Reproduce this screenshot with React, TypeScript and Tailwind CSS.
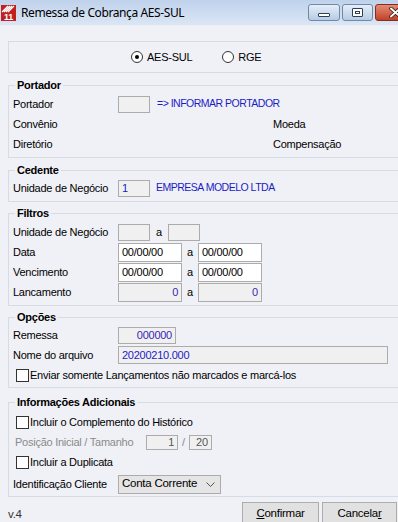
import type { ReactNode } from "react";

/** Windows-style "Remessa de Cobrança" dialog. */

function AppIcon() {
  return (
    <svg width="15" height="16" viewBox="0 0 15 16" className="shrink-0">
      <rect x="0" y="0" width="15" height="16" fill="#c21f1f" />
      <path d="M1 7 L7 1 M3 7 L9 1 M5 7 L11 1 M7 7 L13 1" stroke="#fff" strokeWidth="1.2" />
      <text x="3" y="15" fontSize="9" fontWeight="bold" fill="#fff" fontFamily="Liberation Sans, Arial, sans-serif">
        11
      </text>
    </svg>
  );
}

function TitleBar() {
  return (
    <div className="flex h-[25px] w-[418px] items-center bg-gradient-to-b from-[#bfd2ec] to-[#dbe6f4] pl-[1px]">
      <AppIcon />
      <span className="ml-[5px] font-['Noto_Sans',sans-serif] text-[12px] tracking-[-0.4px] text-black">
        Remessa de Cobrança AES-SUL
      </span>
      <div className="ml-auto mt-[4px] flex h-[17px] gap-[2px] self-start">
        <div className="flex w-[32px] items-center justify-center rounded-[3px] border border-[#6f8aa8] bg-gradient-to-b from-[#e6eef8] to-[#b7cbe3]">
          <div className="mt-[5px] h-[4px] w-[12px] rounded-[1px] border border-[#2f3f55] bg-white" />
        </div>
        <div className="flex w-[31px] items-center justify-center rounded-[3px] border border-[#6f8aa8] bg-gradient-to-b from-[#e6eef8] to-[#b7cbe3]">
          <div className="flex h-[9px] w-[11px] items-center justify-center rounded-[1px] border border-[#2f3f55] bg-white">
            <div className="h-[3px] w-[5px] border border-[#2f3f55]" />
          </div>
        </div>
        <div className="flex w-[43px] items-center justify-start rounded-[3px] border border-[#8c2b1c] bg-gradient-to-b from-[#e38a74] to-[#c23f26] pl-[13px]">
          <svg width="13" height="11" viewBox="0 0 13 11">
            <path d="M2 1.5 L11 9.5 M11 1.5 L2 9.5" stroke="#3b1a14" strokeWidth="3.6" strokeLinecap="round" />
            <path d="M2 1.5 L11 9.5 M11 1.5 L2 9.5" stroke="#fff" strokeWidth="2" strokeLinecap="round" />
          </svg>
        </div>
      </div>
    </div>
  );
}

function Group({ title, className = "", children }: { title?: string; className?: string; children: ReactNode }) {
  return (
    <fieldset className={`mr-[-24px] border border-[#d6dce4] pl-[4px] ${className}`}>
      {title && (
        <legend className="ml-[2px] px-[2px] text-[11px] font-bold leading-[14px] text-black">{title}</legend>
      )}
      {children}
    </fieldset>
  );
}

function Row({ label, children, className = "h-5" }: { label?: ReactNode; children?: ReactNode; className?: string }) {
  return (
    <div className={`flex items-center ${className}`}>
      <span className="w-[105px] shrink-0">{label}</span>
      {children}
    </div>
  );
}

function Box({
  w,
  h = "h-[17px]",
  value,
  right,
  white,
  color = "text-black",
}: {
  w: string;
  h?: string;
  value?: string;
  right?: boolean;
  white?: boolean;
  color?: string;
}) {
  return (
    <div
      className={`flex items-center border border-[#acacac] ${w} ${h} ${white ? "bg-white" : "bg-[#f0f0f0]"} ${
        right ? "justify-end pr-[3px]" : "pl-[3px]"
      } ${color}`}
    >
      {value}
    </div>
  );
}

function Check({ label }: { label: string }) {
  return (
    <div className="flex h-5 items-center pl-[3px]">
      <div className="h-[13px] w-[13px] border border-[#333] bg-white" />
      <span className="ml-[1px]">{label}</span>
    </div>
  );
}

function Radio({ label, checked }: { label: string; checked?: boolean }) {
  return (
    <div className="flex items-center">
      <div className="flex h-[12px] w-[12px] items-center justify-center rounded-full border border-[#333] bg-white">
        {checked && <div className="h-[4px] w-[4px] rounded-full bg-black" />}
      </div>
      <span className="ml-[4px]">{label}</span>
    </div>
  );
}

const A = ({ className = "mx-[5px]" }: { className?: string }) => <span className={className}>a</span>;

const caps = "text-[10.5px] tracking-[-0.5px] text-[#1c1cc4]";

export default function App() {
  return (
    <div className="h-[522px] w-[398px] overflow-hidden bg-[#f0f1f6] font-['Liberation_Sans',Arial,sans-serif] text-[11px] tracking-[-0.25px] text-black">
      <TitleBar />
      <div className="pl-2 pt-4">
        <Group className="h-[32px]">
          <div className="flex h-[30px] items-center gap-[30px] pl-[118px]">
            <Radio label="AES-SUL" checked />
            <Radio label="RGE" />
          </div>
        </Group>

        <Group title="Portador" className="mt-[5px] pb-[3px]">
          <div className="pt-[2px]">
            <Row label="Portador">
              <Box w="w-[32px]" />
              <span className={`ml-[7px] ${caps}`}>=&gt; INFORMAR PORTADOR</span>
            </Row>
            <Row label="Convênio">
              <span className="ml-[155px]">Moeda</span>
            </Row>
            <Row label="Diretório">
              <span className="ml-[155px]">Compensação</span>
            </Row>
          </div>
        </Group>

        <Group title="Cedente" className="mt-[5px] pb-[3px]">
          <div className="pt-[1px]">
            <Row label="Unidade de Negócio">
              <Box w="w-[32px]" value="1" color="text-[#1c1cc4]" />
              <span className={`ml-[6px] ${caps}`}>EMPRESA MODELO LTDA</span>
            </Row>
          </div>
        </Group>

        <Group title="Filtros" className="mt-[4px] pb-[3px]">
          <div className="pt-[2px]">
            <Row label="Unidade de Negócio">
              <Box w="w-[32px]" />
              <A className="mx-[6px]" />
              <Box w="w-[32px]" />
            </Row>
            <Row label="Data">
              <Box w="w-[64px]" h="h-[19px]" value="00/00/00" white />
              <A />
              <Box w="w-[64px]" h="h-[19px]" value="00/00/00" white />
            </Row>
            <Row label="Vencimento">
              <Box w="w-[64px]" h="h-[19px]" value="00/00/00" white />
              <A />
              <Box w="w-[64px]" h="h-[19px]" value="00/00/00" white />
            </Row>
            <Row label="Lancamento">
              <Box w="w-[64px]" h="h-[19px]" value="0" right color="text-[#3a1fb8]" />
              <A />
              <Box w="w-[64px]" h="h-[19px]" value="0" right color="text-[#3a1fb8]" />
            </Row>
          </div>
        </Group>

        <Group title="Opções" className="mt-[4px] pb-[2px]">
          <div className="pt-[1px]">
            <Row label="Remessa">
              <Box w="w-[58px]" value="000000" right color="text-[#3a1fb8]" />
            </Row>
            <Row label="Nome do arquivo">
              <Box w="w-[270px]" h="h-[18px]" value="20200210.000" color="text-[#1c1cc4]" />
            </Row>
            <Check label="Enviar somente Lançamentos não marcados e marcá-los" />
          </div>
        </Group>

        <Group title="Informações Adicionais" className="mt-[7px]">
          <div className="pt-[3px]">
            <Check label="Incluir o Complemento do Histórico" />
            <div className="flex h-5 items-center pl-[2px] text-[#8a8a8a]">
              <span className="w-[131px] shrink-0">Posição Inicial / Tamanho</span>
              <Box w="w-[32px]" h="h-[15px]" value="1" right color="text-[#555]" />
              <span className="mx-[4px]">/</span>
              <Box w="w-[23px]" h="h-[15px]" value="20" right color="text-[#555]" />
            </div>
            <Check label="Incluir a Duplicata" />
            <Row label="Identificação Cliente" className="h-6">
              <div className="flex h-[19px] w-[103px] items-center justify-between border border-[#acacac] bg-[#e5e5e5] pl-[3px] pr-[5px] text-[11.5px]">
                <span>Conta Corrente</span>
                <svg width="9" height="5" viewBox="0 0 9 5">
                  <path d="M0.5 0.5 L4.5 4.5 L8.5 0.5" fill="none" stroke="#555" strokeWidth="1" />
                </svg>
              </div>
            </Row>
          </div>
        </Group>

        <div className="flex items-start pt-[5px]">
          <span className="mt-[5px] text-[11.5px] leading-[14px] text-[#333]">v.4</span>
          <div className="ml-auto mr-[1px] flex gap-[3px]">
            <button className="h-[23px] w-[77px] border border-[#adadad] bg-[#e1e1e1] text-[11.5px]">
              <span className="underline">C</span>onfirmar
            </button>
            <button className="h-[23px] w-[75px] border border-[#adadad] bg-[#e1e1e1] text-[11.5px]">
              Cancela<span className="underline">r</span>
            </button>
          </div>
        </div>
      </div>
    </div>
  );
}
